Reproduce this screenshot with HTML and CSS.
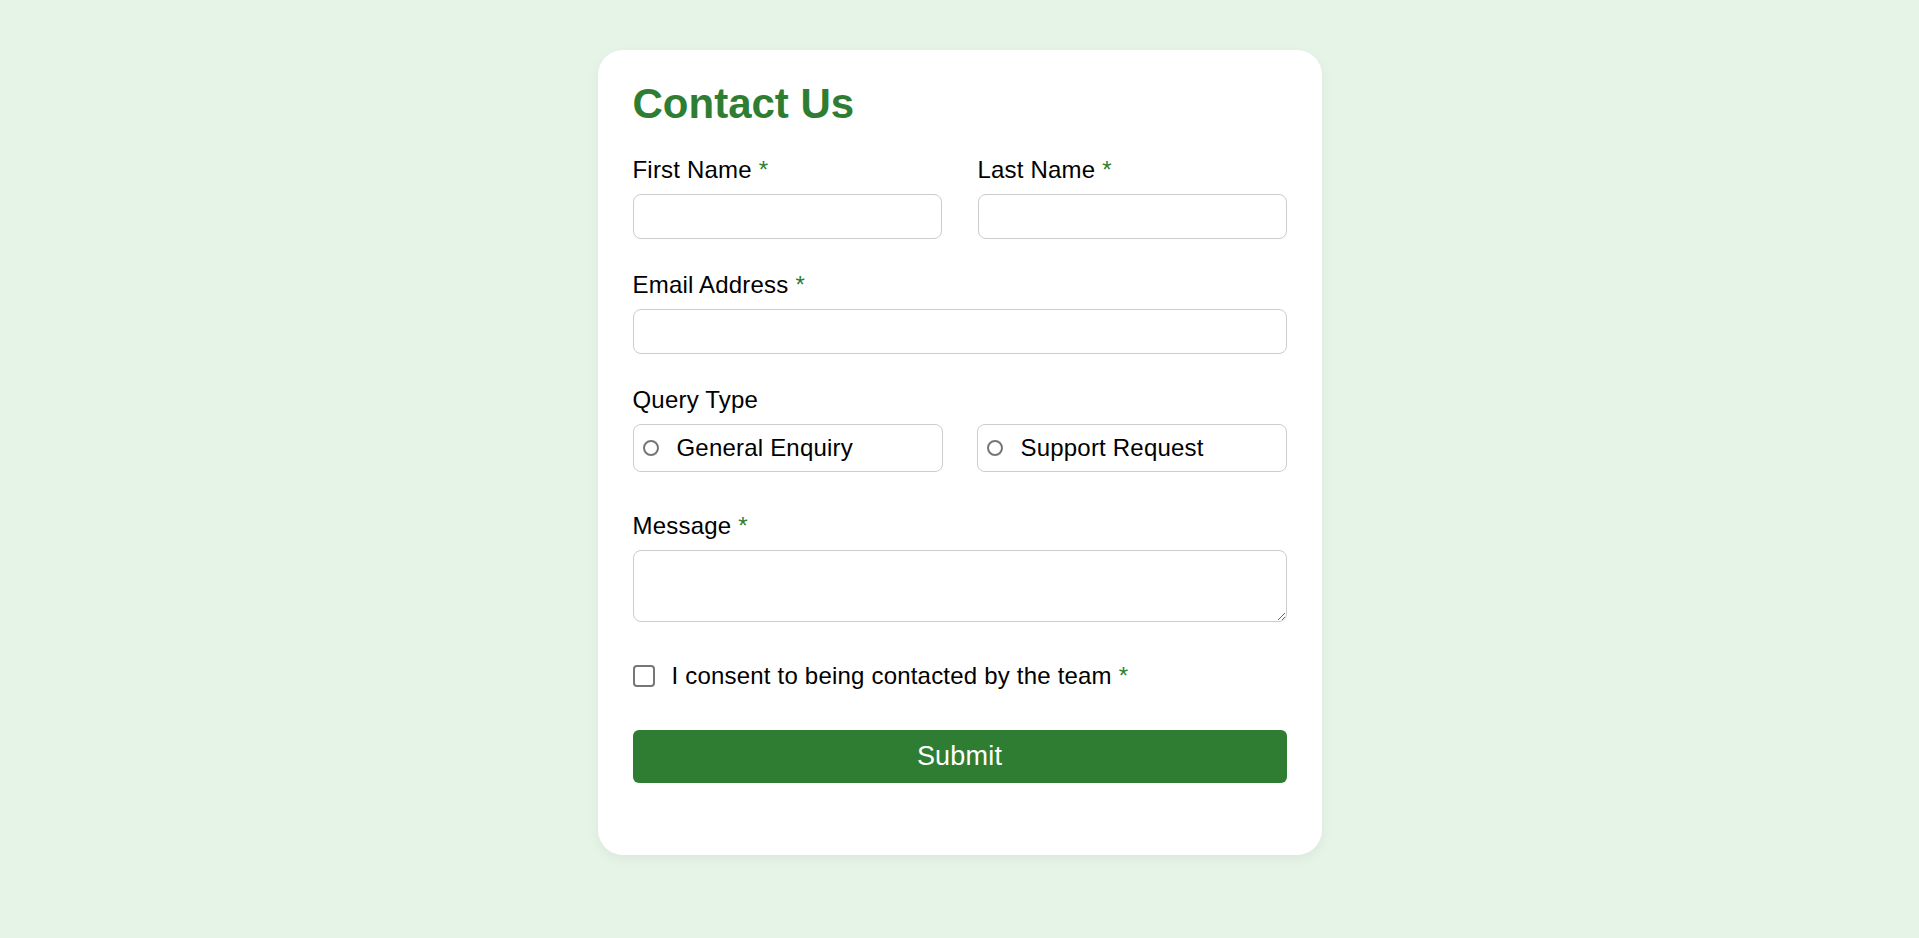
FILE: index.html
```html
<!DOCTYPE html>
<html lang="en">
<head>
<meta charset="utf-8">
<title>Contact Us</title>
<link rel="stylesheet" href="styles.css">
</head>
<body>
<main class="card">
  <h1 class="title">Contact Us</h1>
  <form class="form">
    <div class="row">
      <div class="field">
        <label class="label" for="first-name">First Name <span class="req">*</span></label>
        <input class="input" id="first-name" type="text">
      </div>
      <div class="field">
        <label class="label" for="last-name">Last Name <span class="req">*</span></label>
        <input class="input" id="last-name" type="text">
      </div>
    </div>
    <div class="field">
      <label class="label" for="email">Email Address <span class="req">*</span></label>
      <input class="input" id="email" type="email">
    </div>
    <div class="field field-wide-gap">
      <span class="label">Query Type</span>
      <div class="radios">
        <label class="radio-option"><input class="radio" type="radio" name="query"><span>General Enquiry</span></label>
        <label class="radio-option"><input class="radio" type="radio" name="query"><span>Support Request</span></label>
      </div>
    </div>
    <div class="field field-wide-gap">
      <label class="label" for="message">Message <span class="req">*</span></label>
      <textarea class="textarea" id="message"></textarea>
    </div>
    <label class="consent"><input class="checkbox" type="checkbox"><span>I consent to being contacted by the team <span class="req">*</span></span></label>
    <button class="submit" type="button">Submit</button>
  </form>
</main>
</body>
</html>
```

FILE: styles.css
```css
html, body {
  margin: 0;
  padding: 0;
}

body {
  background: #e6f4e7;
  font-family: "Liberation Sans", Arial, sans-serif;
  color: #000;
  padding-top: 50px;
  min-height: 938px;
  box-sizing: border-box;
}

.card {
  width: 724px;
  margin: 0 auto;
  box-sizing: border-box;
  padding: 30px 35px 72px;
  background: #fff;
  border-radius: 25px;
  box-shadow: 0 4px 12px rgba(0, 0, 0, 0.05);
}

.title {
  margin: 0 0 28px;
  font-size: 42px;
  line-height: 48px;
  font-weight: 700;
  color: #2e7d32;
}

.form {
  display: flex;
  flex-direction: column;
}

.row {
  display: grid;
  grid-template-columns: 1fr 1fr;
  column-gap: 36px;
}

.field {
  display: flex;
  flex-direction: column;
  margin-bottom: 32px;
}

.field-wide-gap {
  margin-bottom: 40px;
}

.label {
  display: block;
  font-size: 24px;
  line-height: 28px;
  letter-spacing: 0.2px;
  margin-bottom: 10px;
}

.req {
  color: #2e7d32;
}

.input {
  display: block;
  box-sizing: border-box;
  width: 100%;
  height: 45px;
  margin: 0;
  border: 1px solid #cccccc;
  border-radius: 8px;
  background: #fff;
  font: inherit;
  font-size: 20px;
  padding: 0 12px;
}

.radios {
  display: grid;
  grid-template-columns: 1fr 1fr;
  column-gap: 34px;
}

.radio-option {
  display: flex;
  align-items: center;
  gap: 18px;
  height: 48px;
  box-sizing: border-box;
  padding: 0 9px;
  border: 1px solid #cccccc;
  border-radius: 8px;
  font-size: 24px;
  line-height: 28px;
  letter-spacing: 0.2px;
}

.radio {
  appearance: none;
  -webkit-appearance: none;
  width: 16px;
  height: 16px;
  margin: 0;
  flex: none;
  border: 2px solid #767676;
  border-radius: 50%;
  background: #fff;
  box-sizing: border-box;
}

.textarea {
  display: block;
  box-sizing: border-box;
  width: 100%;
  height: 72px;
  margin: 0;
  border: 1px solid #cccccc;
  border-radius: 8px;
  font: inherit;
  font-size: 20px;
  padding: 8px 12px;
}

.consent {
  display: flex;
  align-items: center;
  gap: 17px;
  font-size: 24px;
  line-height: 28px;
  letter-spacing: 0.2px;
  margin-bottom: 40px;
}

.checkbox {
  appearance: none;
  -webkit-appearance: none;
  width: 22px;
  height: 22px;
  margin: 0;
  flex: none;
  border: 2px solid #767676;
  border-radius: 4px;
  background: #fff;
  box-sizing: border-box;
}

.submit {
  display: block;
  width: 100%;
  height: 53px;
  margin: 0;
  border: none;
  border-radius: 6px;
  background: #2e7d32;
  color: #fff;
  font-family: "Liberation Sans", Arial, sans-serif;
  font-size: 27px;
  letter-spacing: 0.2px;
  cursor: pointer;
}
```
